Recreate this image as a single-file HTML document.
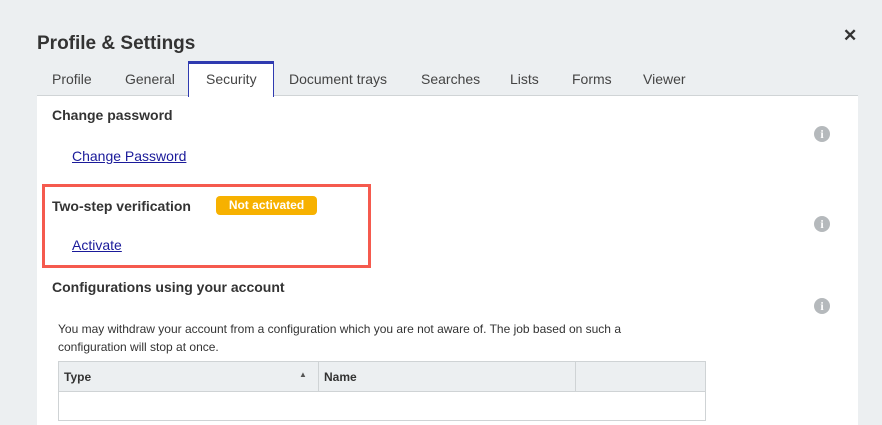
<!DOCTYPE html>
<html><head><style>
*{margin:0;padding:0;box-sizing:border-box}
body{width:882px;height:416px;background:#eceff1;font-family:"Liberation Sans",sans-serif;color:#333;position:relative;overflow:hidden}
.a{position:absolute;white-space:nowrap}
h1{position:absolute;left:37px;top:33px;font-size:19px;font-weight:bold;color:#333}
.tab{position:absolute;top:71px;font-size:14px;color:#444}
.panel{position:absolute;left:37px;top:95px;width:821px;height:330px;background:#fff;border-top:1px solid #d0d4d6}
.h{font-size:14px;font-weight:bold;color:#333}
a{color:#1a1a9a;text-decoration:underline;font-size:14px}
.info{position:absolute;width:16px;height:16px;border-radius:50%;background:#b5b9bc;color:#fff;font:bold 12px "Liberation Serif",serif;text-align:center;line-height:16px}
</style></head><body>
<h1>Profile &amp; Settings</h1>
<div class="a" style="left:843px;top:26px;font-size:17px;font-weight:bold;color:#333">✕</div>
<div class="panel"></div>
<div class="tab" style="left:52px">Profile</div>
<div class="tab" style="left:125px">General</div>
<div class="a" style="left:188px;top:61px;width:86px;height:36px;background:#fff;border:1px solid #2f3ab0;border-top:3px solid #2f3ab0;border-bottom:none"></div>
<div class="tab" style="left:206px">Security</div>
<div class="tab" style="left:289px">Document trays</div>
<div class="tab" style="left:421px">Searches</div>
<div class="tab" style="left:510px">Lists</div>
<div class="tab" style="left:572px">Forms</div>
<div class="tab" style="left:643px">Viewer</div>
<div class="a h" style="left:52px;top:107px">Change password</div>
<a class="a" style="left:72px;top:148px">Change Password</a>
<div class="a" style="left:42px;top:184px;width:329px;height:84px;border:3px solid #f55a4e"></div>
<div class="a h" style="left:52px;top:198px">Two-step verification</div>
<div class="a" style="left:216px;top:196px;width:101px;height:19px;background:#f7b100;border-radius:4px;color:#fff;font-size:12px;font-weight:bold;text-align:center;line-height:19px">Not activated</div>
<a class="a" style="left:72px;top:237px">Activate</a>
<div class="a h" style="left:52px;top:279px">Configurations using your account</div>
<div class="a" style="left:58px;top:320px;font-size:12px;line-height:18px;color:#333">You may withdraw your account from a configuration which you are not aware of. The job based on such a<br>configuration will stop at once.</div>
<div class="a" style="left:58px;top:361px;width:648px;height:60px;border:1px solid #cfd3d5"></div>
<div class="a" style="left:59px;top:362px;width:646px;height:30px;background:#eceff1;border-bottom:1px solid #cfd3d5"></div>
<div class="a" style="left:318px;top:362px;width:1px;height:30px;background:#cfd3d5"></div>
<div class="a" style="left:575px;top:362px;width:1px;height:30px;background:#cfd3d5"></div>
<div class="a" style="left:64px;top:370px;font-size:12px;font-weight:bold">Type</div>
<div class="a" style="left:299px;top:370px;font-size:8px;color:#555">▲</div>
<div class="a" style="left:324px;top:370px;font-size:12px;font-weight:bold">Name</div>
<div class="info" style="left:814px;top:126px">i</div>
<div class="info" style="left:814px;top:216px">i</div>
<div class="info" style="left:814px;top:298px">i</div>
</body></html>
